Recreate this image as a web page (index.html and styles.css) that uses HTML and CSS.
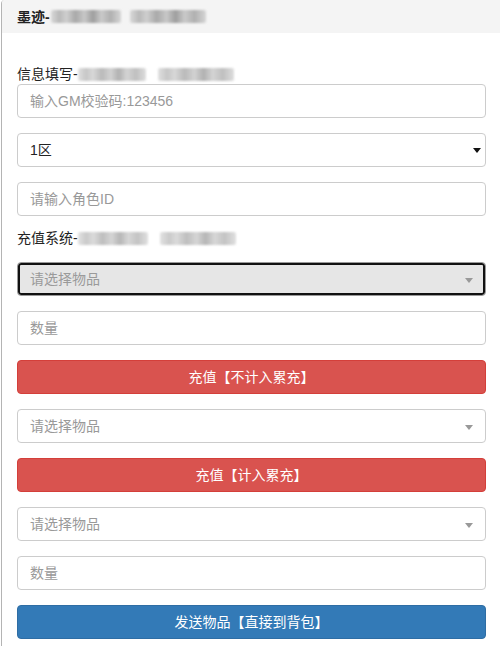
FILE: index.html
```html
<!DOCTYPE html>
<html lang="zh-CN">
<head>
<meta charset="utf-8">
<title>墨迹</title>
<link rel="stylesheet" href="styles.css">
</head>
<body>
<div class="panel">
  <div class="panel-heading">
    <span class="title">墨迹-</span><span class="smudge s-a"></span><span class="smudge s-b"></span>
  </div>
  <div class="panel-body">
    <div class="label first">信息填写-<span class="smudge s-c"></span><span class="smudge s-d"></span></div>
    <div class="control group"><span class="ph">输入GM校验码:123456</span></div>
    <div class="control select group"><span class="val">1区</span><span class="caret dark"></span></div>
    <div class="control group tight"><span class="ph">请输入角色ID</span></div>
    <div class="label second">充值系统-<span class="smudge s-e"></span><span class="smudge s-f"></span></div>
    <div class="control select disabled group"><span class="ph">请选择物品</span><span class="caret grey"></span></div>
    <div class="control group"><span class="ph">数量</span></div>
    <div class="btn red group">充值【不计入累充】</div>
    <div class="control select group"><span class="ph">请选择物品</span><span class="caret grey"></span></div>
    <div class="btn red group">充值【计入累充】</div>
    <div class="control select group"><span class="ph">请选择物品</span><span class="caret grey"></span></div>
    <div class="control group"><span class="ph">数量</span></div>
    <div class="btn blue group">发送物品【直接到背包】</div>
  </div>
</div>
</body>
</html>
```

FILE: styles.css
```css
html, body {
  margin: 0;
  padding: 0;
  background: #fff;
}
body {
  font-family: "Liberation Sans", "Noto Sans CJK SC", sans-serif;
  font-size: 14px;
  line-height: 20px;
  color: #333;
  overflow: hidden;
}
.panel {
  margin-left: 1px;
  width: 500px;
  border-left: 1px solid #b4b4b4;
  border-radius: 4px 0 0 0;
  box-sizing: border-box;
}
.panel-heading {
  height: 33px;
  background: #f4f4f4;
  padding: 0 0 0 15px;
  display: flex;
  align-items: center;
  border-top-left-radius: 3px;
}
.title {
  font-weight: bold;
  color: #222;
}
.smudge {
  display: inline-block;
  height: 13px;
  border-radius: 2px;
  filter: blur(1.2px);
  background: linear-gradient(90deg, #d9d9d9 0%, #b9b9b9 12%, #cfcfcf 22%, #a9a9a9 35%, #c8c8c8 48%, #9e9e9e 60%, #cacaca 72%, #b0b0b0 85%, #d6d6d6 100%);
}
.s-a { width: 70px; margin-left: 1px; }
.s-b { width: 76px; margin-left: 9px; }
.s-c { width: 68px; vertical-align: -2px; opacity: 0.8; }
.s-d { width: 76px; margin-left: 12px; vertical-align: -2px; opacity: 0.8; }
.s-e { width: 70px; vertical-align: -2px; opacity: 0.75; }
.s-f { width: 76px; margin-left: 12px; vertical-align: -2px; opacity: 0.75; }
.panel-body {
  padding: 31px 15px 15px 15px;
  display: flex;
  flex-direction: column;
}
.label {
  height: 20px;
  line-height: 20px;
  color: #222;
  white-space: nowrap;
}
.label.second {
  margin-bottom: 14px;
}
.group {
  margin-bottom: 15px;
}
.group.tight {
  margin-bottom: 12px;
}
.control {
  position: relative;
  height: 34px;
  box-sizing: border-box;
  border: 1px solid #ccc;
  border-radius: 4px;
  padding: 6px 12px;
  display: flex;
  align-items: center;
  background: #fff;
}
.ph {
  color: #999;
}
.val {
  color: #222;
}
.caret {
  position: absolute;
  top: 15px;
  width: 0;
  height: 0;
  border-top: 5px solid #888;
  border-left: 4px solid transparent;
  border-right: 4px solid transparent;
}
.caret.grey {
  right: 12px;
  border-top-color: #999;
}
.caret.dark {
  right: 4px;
  top: 14px;
  border-top-color: #111;
}
.control.disabled {
  background: #e6e6e6;
  border-color: #999;
  box-shadow: inset 0 0 0 2px #111;
}
.control.disabled .ph {
  color: #9a9a9a;
}
.btn {
  height: 34px;
  box-sizing: border-box;
  border: 1px solid;
  border-radius: 4px;
  display: flex;
  align-items: center;
  justify-content: center;
  color: #fff;
}
.btn.red {
  background: #d9534f;
  border-color: #d43f3a;
}
.btn.blue {
  background: #337ab7;
  border-color: #2e6da4;
}
```
